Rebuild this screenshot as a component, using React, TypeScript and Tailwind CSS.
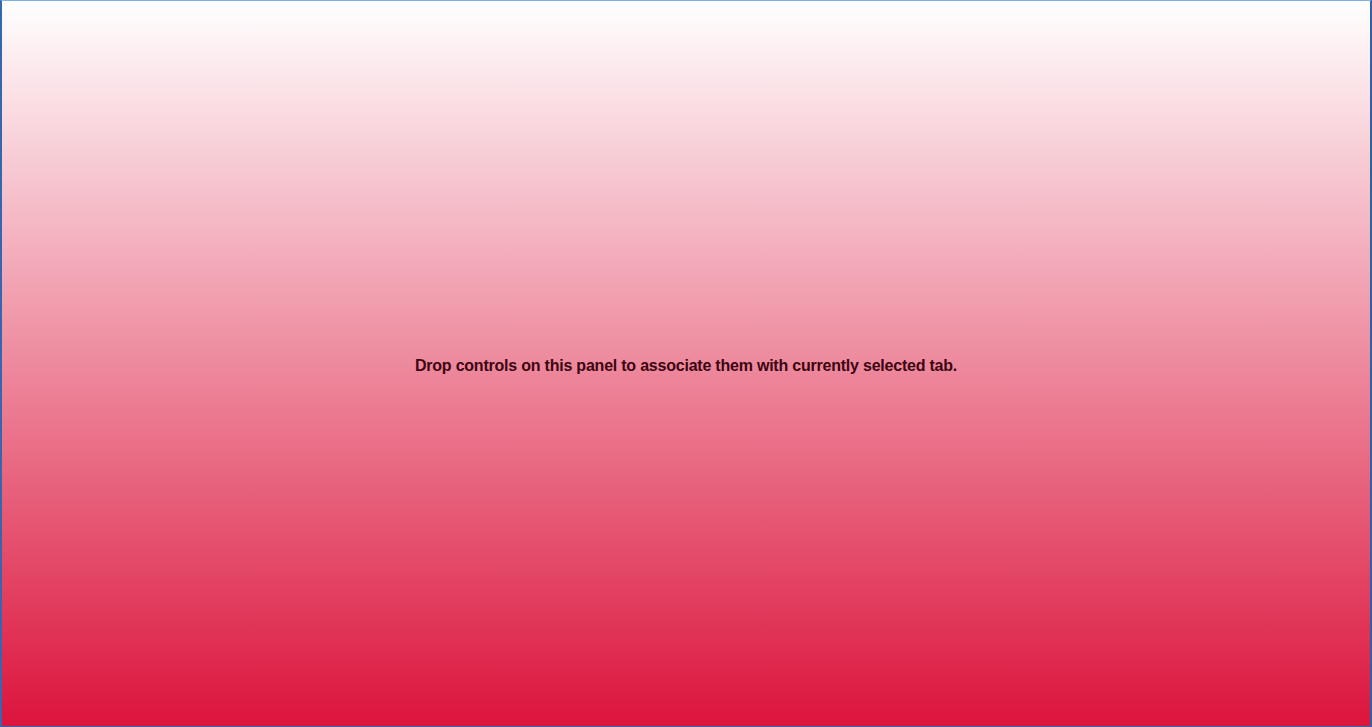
export default function App() {
  return (
    <div className="w-[1372px] h-[727px] border-t border-t-[#7fb0e6] border-l-2 border-l-[#3567b0] border-r-2 border-r-[#33609e] border-b border-b-[#3568a8] bg-[linear-gradient(to_bottom,#ffffff,#dc143c)] flex items-center justify-center">
      <div className="mt-[4px] text-[16px] font-bold tracking-[-0.22px] text-[#3d0512] font-['Liberation_Sans',Arial,sans-serif]">
        Drop controls on this panel to associate them with currently selected tab.
      </div>
    </div>
  );
}
